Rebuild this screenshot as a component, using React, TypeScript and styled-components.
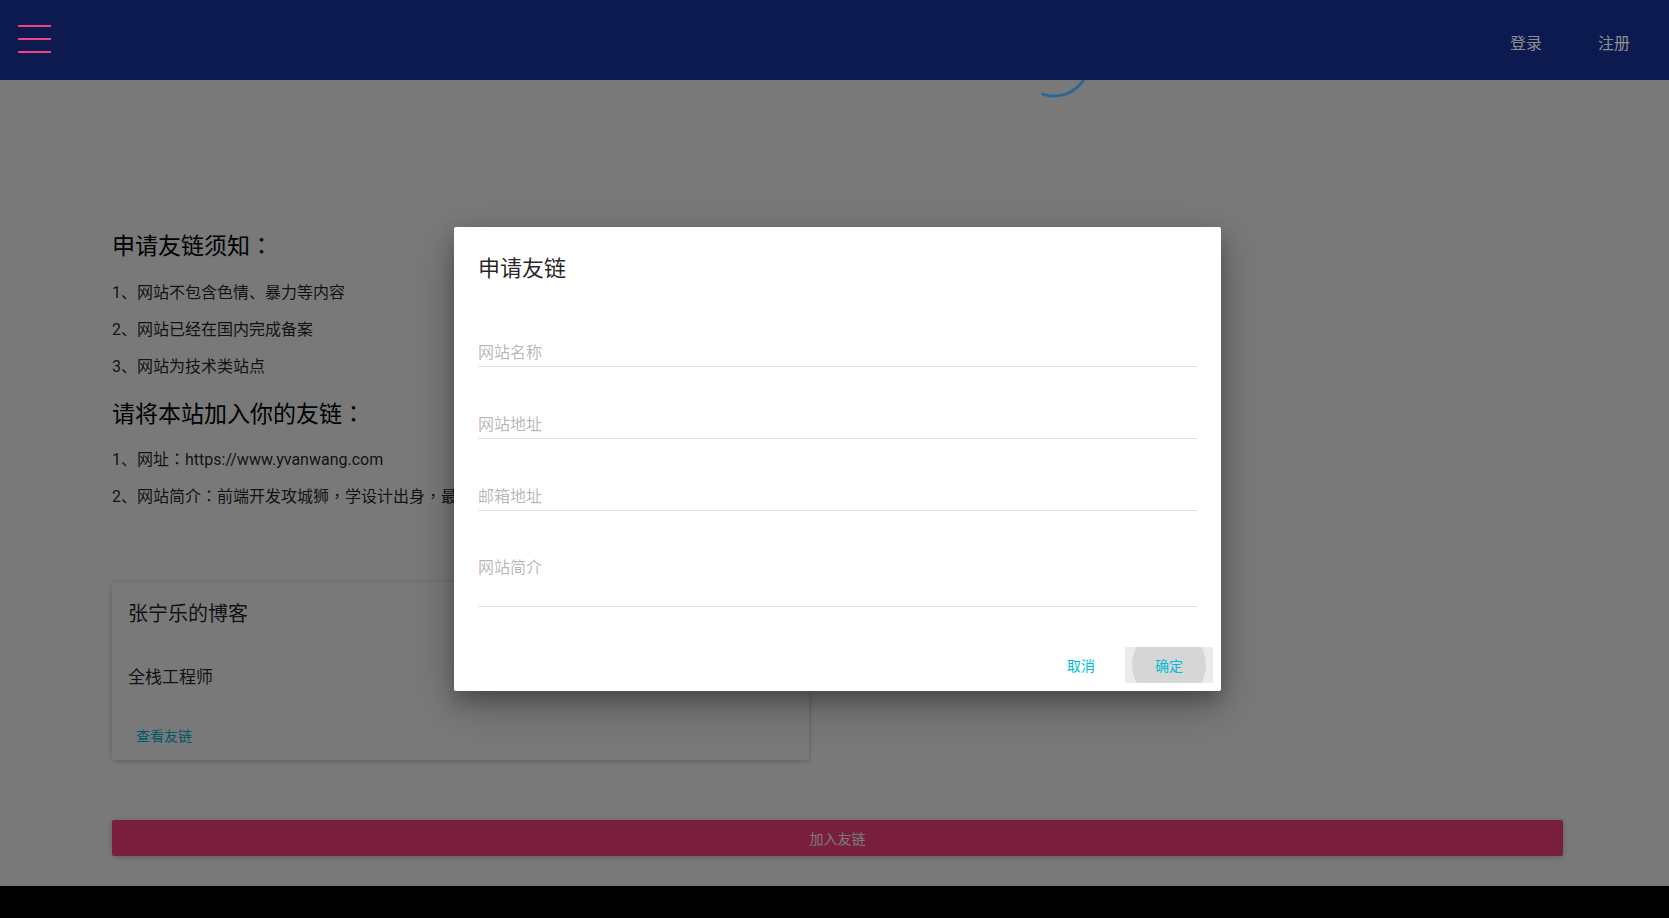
import styled, { createGlobalStyle } from "styled-components";

const GlobalStyle = createGlobalStyle`
  html, body {
    margin: 0;
    padding: 0;
    background: #000;
  }
  body {
    font-family: Roboto, "Noto Sans CJK SC", sans-serif;
    color: rgba(0, 0, 0, 0.87);
  }
  * {
    box-sizing: border-box;
  }
`;

const fields = [
  { name: "name", hint: "网站名称" },
  { name: "url", hint: "网站地址" },
  { name: "email", hint: "邮箱地址" },
];

const App = () => {
  return (
    <Page>
      <GlobalStyle />
      <Header>
        <MenuButton aria-label="menu">
          <span />
          <span />
          <span />
        </MenuButton>
        <Nav>
          <NavLink>登录</NavLink>
          <NavLink>注册</NavLink>
        </Nav>
      </Header>

      <Spinner width="100" height="80" viewBox="1010 30 100 80">
        <path
          d="M 1042.6 94.1 A 35 35 0 0 0 1088.5 54.9"
          fill="none"
          stroke="#2a6797"
          strokeWidth="3"
          strokeLinecap="round"
        />
      </Spinner>

      <Content>
        <Heading>
          申请友链须知<Punct>：</Punct>
        </Heading>
        <List>
          <Item>1、网站不包含色情、暴力等内容</Item>
          <Item>2、网站已经在国内完成备案</Item>
          <Item>3、网站为技术类站点</Item>
        </List>
        <Heading $gap={20}>
          请将本站加入你的友链<Punct>：</Punct>
        </Heading>
        <List $gap={17}>
          <Item>
            1、网址<Punct>：</Punct>https://www.yvanwang.com
          </Item>
          <Item>
            2、网站简介<Punct>：</Punct>前端开发攻城狮<Punct>，</Punct>学设计出身
            <Punct>，</Punct>最喜欢折腾各种新技术
          </Item>
        </List>

        <Card>
          <CardTitle>张宁乐的博客</CardTitle>
          <CardText>全栈工程师</CardText>
          <CardActions>
            <FlatButton>查看友链</FlatButton>
          </CardActions>
        </Card>

        <AddButton>加入友链</AddButton>
      </Content>

      <Overlay />

      <Dialog>
        <DialogTitle>申请友链</DialogTitle>
        <DialogBody>
          {fields.map((f) => (
            <Field key={f.name}>
              <Input name={f.name} placeholder={f.hint} />
            </Field>
          ))}
          <Field $multi>
            <TextArea name="desc" placeholder="网站简介" rows={2} />
          </Field>
        </DialogBody>
        <DialogActions>
          <FlatButton>
            <span>取消</span>
          </FlatButton>
          <FlatButton $active>
            <Ripple />
            <span>确定</span>
          </FlatButton>
        </DialogActions>
      </Dialog>
    </Page>
  );
};

export default App;

const Page = styled.div`
  position: relative;
  height: 886px;
  overflow: hidden;
  background: #fff;
`;

const Header = styled.header`
  position: relative;
  z-index: 3;
  height: 80px;
  background: #0c1a4f;
  display: flex;
  align-items: center;
  justify-content: space-between;
  padding: 0 11px 0 18px;
`;

const MenuButton = styled.button`
  display: flex;
  flex-direction: column;
  gap: 11px;
  width: 33px;
  padding: 0;
  margin-top: -2px;
  border: none;
  background: transparent;
  span {
    display: block;
    height: 2px;
    background: #f0427e;
  }
`;

const Nav = styled.nav`
  display: flex;
  align-items: center;
  margin-top: 7px;
`;

const NavLink = styled.a`
  padding: 0 28px;
  font-size: 16px;
  line-height: 36px;
  color: #8f8f8f;
  cursor: pointer;
`;

const Spinner = styled.svg`
  position: absolute;
  left: 1010px;
  top: 30px;
  z-index: 2;
`;

const Content = styled.main`
  width: 1451px;
  margin-left: 112px;
  padding-top: 151px;
`;

const Punct = styled.span`
  font-family: "Noto Sans CJK TC", sans-serif;
  line-height: 0;
`;

const Heading = styled.h2<{ $gap?: number }>`
  margin: ${(p) => p.$gap ?? 0}px 0 0;
  font-size: 23px;
  font-weight: 400;
  line-height: 32px;
  color: #000;
`;

const List = styled.div<{ $gap?: number }>`
  display: flex;
  flex-direction: column;
  gap: 13px;
  margin-top: ${(p) => p.$gap ?? 18}px;
`;

const Item = styled.p`
  margin: 0;
  height: 24px;
  font-size: 16px;
  line-height: 24px;
  color: rgba(0, 0, 0, 0.87);
  white-space: nowrap;
`;

const Card = styled.div`
  width: 697px;
  margin-top: 73px;
  background: #fff;
  border-radius: 2px;
  box-shadow: rgba(0, 0, 0, 0.12) 0 1px 6px, rgba(0, 0, 0, 0.12) 0 1px 4px;
`;

const CardTitle = styled.div`
  padding: 16px;
  font-size: 20px;
  line-height: 32px;
  color: rgba(0, 0, 0, 0.87);
`;

const CardText = styled.div`
  padding: 19px 16px 0;
  font-size: 17px;
  line-height: 24px;
  color: rgba(0, 0, 0, 0.87);
`;

const CardActions = styled.div`
  padding: 28px 8px 7px;
  display: flex;
`;

const FlatButton = styled.button<{ $active?: boolean }>`
  position: relative;
  overflow: hidden;
  min-width: 88px;
  height: 36px;
  padding: 3px 16px 0;
  border: none;
  border-radius: 2px;
  background: ${(p) => (p.$active ? "#ebebeb" : "transparent")};
  color: #00bcd4;
  font-family: inherit;
  font-size: 14px;
  line-height: 33px;
  cursor: pointer;
  span {
    position: relative;
  }
`;

const Ripple = styled.i`
  position: absolute;
  left: 50%;
  top: 50%;
  width: 74px;
  height: 74px;
  margin: -37px 0 0 -37px;
  border-radius: 50%;
  background: #d6d6d6;
`;

const AddButton = styled.button`
  display: block;
  width: 100%;
  height: 36px;
  margin-top: 60px;
  border: none;
  border-radius: 2px;
  background: #ff4081;
  color: #fff;
  font-family: inherit;
  font-size: 14px;
  box-shadow: rgba(0, 0, 0, 0.12) 0 1px 6px, rgba(0, 0, 0, 0.12) 0 1px 4px;
`;

const Overlay = styled.div`
  position: absolute;
  inset: 0;
  z-index: 1;
  background: rgba(0, 0, 0, 0.525);
`;

const Dialog = styled.div`
  position: absolute;
  z-index: 4;
  left: 454px;
  top: 227px;
  width: 767px;
  background: #fff;
  border-radius: 2px;
  box-shadow: rgba(0, 0, 0, 0.25) 0 14px 45px, rgba(0, 0, 0, 0.22) 0 10px 18px;
`;

const DialogTitle = styled.h3`
  margin: 0;
  padding: 26px 24px 18px;
  font-size: 22px;
  font-weight: 400;
  line-height: 32px;
  color: rgba(0, 0, 0, 0.87);
`;

const DialogBody = styled.div`
  padding: 0 24px 24px;
`;

const Field = styled.div<{ $multi?: boolean }>`
  position: relative;
  height: ${(p) => (p.$multi ? 96 : 72)}px;
  display: flex;
  flex-direction: column;
  justify-content: ${(p) => (p.$multi ? "flex-start" : "flex-end")};
  padding: ${(p) => (p.$multi ? "37px 0 0" : "0 0 10px")};
  &::after {
    content: "";
    position: absolute;
    left: 0;
    right: 0;
    bottom: 8px;
    height: 1px;
    background: #e0e0e0;
  }
`;

const Input = styled.input`
  width: 100%;
  height: 24px;
  padding: 0;
  border: none;
  outline: none;
  background: transparent;
  font-family: inherit;
  font-size: 16px;
  line-height: 24px;
  color: rgba(0, 0, 0, 0.87);
  &::placeholder {
    color: rgba(0, 0, 0, 0.3);
  }
`;

const TextArea = styled.textarea`
  width: 100%;
  padding: 0;
  border: none;
  outline: none;
  resize: none;
  background: transparent;
  font-family: inherit;
  font-size: 16px;
  line-height: 24px;
  color: rgba(0, 0, 0, 0.87);
  &::placeholder {
    color: rgba(0, 0, 0, 0.3);
  }
`;

const DialogActions = styled.div`
  display: flex;
  justify-content: flex-end;
  padding: 8px;
`;
